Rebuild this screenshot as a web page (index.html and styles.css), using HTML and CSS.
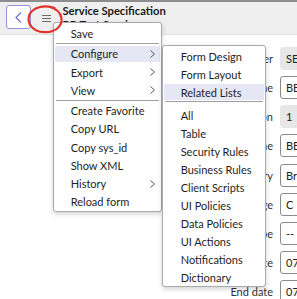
FILE: index.html
```html
<!DOCTYPE html>
<html lang="en">
<head>
    <meta charset="UTF-8">
    <meta name="viewport" content="width=device-width, initial-scale=1.0">
    <title>Service Specification</title>
    <link rel="stylesheet" href="styles.css">
</head>
<body>

    <header class="topbar">
        <button class="back-btn" aria-label="Back">
            <svg width="7" height="11" viewBox="0 0 7 11"><polyline points="6,0.5 1,5.5 6,10.5" fill="none" stroke="#6d72cc" stroke-width="1.2"/></svg>
        </button>
        <span class="hamburger">
            <svg width="9" height="7" viewBox="0 0 9 7"><path d="M0 0.5H9M0 3.5H9M0 6.5H9" stroke="#6b6b6b" stroke-width="1"/></svg>
        </span>
        <h1 class="title">Service Specification<br>BB Test Service</h1>
    </header>

    <div class="form">
        <div class="row"><label>Number</label><div class="field readonly">SES0001234</div></div>
        <div class="row"><label>Name</label><div class="field">BB Test Service</div></div>
        <div class="row"><label>Version</label><div class="field readonly">1</div></div>
        <div class="row"><label>Service line</label><div class="field">BB Test Service</div></div>
        <div class="row"><label>Category</label><div class="field">Broadband</div></div>
        <div class="row"><label>Lifecycle stage</label><div class="field">C 1 Design</div></div>
        <div class="row"><label>Type</label><div class="field">-- None --</div></div>
        <div class="row"><label>Start date</label><div class="field">07/01/2024</div></div>
        <div class="row"><label>End date</label><div class="field">07/01/2025</div></div>
    </div>

    <!-- context menu -->
    <ul class="menu main-menu">
        <li><div class="item">Save</div></li>
        <li class="sep"></li>
        <li class="active"><div class="item">Configure <svg class="chev" width="5" height="8" viewBox="0 0 5 8"><polyline points="0.5,0.5 4.5,4 0.5,7.5" fill="none" stroke="#555" stroke-width="1"/></svg></div></li>
        <li><div class="item">Export <svg class="chev" width="5" height="8" viewBox="0 0 5 8"><polyline points="0.5,0.5 4.5,4 0.5,7.5" fill="none" stroke="#555" stroke-width="1"/></svg></div></li>
        <li><div class="item">View <svg class="chev" width="5" height="8" viewBox="0 0 5 8"><polyline points="0.5,0.5 4.5,4 0.5,7.5" fill="none" stroke="#555" stroke-width="1"/></svg></div></li>
        <li class="sep"></li>
        <li><div class="item">Create Favorite</div></li>
        <li><div class="item">Copy URL</div></li>
        <li><div class="item">Copy sys_id</div></li>
        <li><div class="item">Show XML</div></li>
        <li><div class="item">History <svg class="chev" width="5" height="8" viewBox="0 0 5 8"><polyline points="0.5,0.5 4.5,4 0.5,7.5" fill="none" stroke="#555" stroke-width="1"/></svg></div></li>
        <li><div class="item">Reload form</div></li>
    </ul>

    <ul class="menu sub-menu">
        <li><div class="item">Form Design</div></li>
        <li><div class="item">Form Layout</div></li>
        <li class="active"><div class="item">Related Lists</div></li>
        <li class="sep"></li>
        <li><div class="item">All</div></li>
        <li><div class="item">Table</div></li>
        <li><div class="item">Security Rules</div></li>
        <li><div class="item">Business Rules</div></li>
        <li><div class="item">Client Scripts</div></li>
        <li><div class="item">UI Policies</div></li>
        <li><div class="item">Data Policies</div></li>
        <li><div class="item">UI Actions</div></li>
        <li><div class="item">Notifications</div></li>
        <li><div class="item">Dictionary</div></li>
    </ul>

    <!-- red circle drawn round the menu button -->
    <svg class="annotation" width="70" height="40" viewBox="0 0 70 40">
        <path d="M54.5 8C46 4.5 33 6.5 29.3 15C26.3 23.5 33 31.8 44 32.2C55.5 32.6 62.8 26 61.4 17.8C60.4 12.3 56.5 8.8 49.5 6.8" fill="none" stroke="#e2322b" stroke-width="2.2" stroke-linecap="round"/>
    </svg>

</body>
</html>
```

FILE: styles.css
```css
* {
    margin: 0;
    padding: 0;
    box-sizing: border-box;
}

body {
    font-family: 'Lato', 'Liberation Sans', sans-serif;
    width: 297px;
    height: 299px;
    overflow: hidden;
    position: relative;
    background: #fff;
    color: #222;
}

/* top bar */
.topbar {
    display: flex;
    align-items: flex-start;
    height: 35px;
    padding: 3px 0 0 6px;
    background: #efefef;
    border-top: 2px solid #8d8d8d;
    border-bottom: 1px solid #e0e0e0;
}

.back-btn {
    width: 25px;
    height: 24px;
    border: 1px solid #8f94d8;
    border-radius: 3px;
    background: #fff;
    display: flex;
    align-items: center;
    justify-content: center;
    flex-shrink: 0;
}

.hamburger {
    display: block;
    width: 9px;
    height: 7px;
    margin: 10px 0 0 11px;
    flex-shrink: 0;
}

.hamburger svg {
    display: block;
}

.title {
    margin: -1px 0 0 11.5px;
    font-size: 11.2px;
    font-weight: 700;
    line-height: 13.5px;
    color: #1a1a1a;
    white-space: nowrap;
}

/* form behind the menu */
.form {
    padding-top: 8.7px;
}

.row {
    display: flex;
    align-items: center;
    height: 29.2px;
}

.row label {
    width: 273px;
    flex-shrink: 0;
    text-align: right;
    font-size: 11px;
    color: #333;
}

.field {
    margin-left: 7px;
    width: 120px;
    height: 23px;
    flex-shrink: 0;
    padding-left: 5px;
    border: 1px solid #8a8a8a;
    border-radius: 3px;
    font-size: 11px;
    line-height: 21px;
    white-space: nowrap;
    overflow: hidden;
}

.field.readonly {
    background: #e7e7e7;
    border-color: #e7e7e7;
}

/* menus */
.menu {
    position: absolute;
    list-style: none;
    background: #fff;
    border: 1px solid #a9a9b1;
    border-radius: 3px;
    box-shadow: 0 2px 5px rgba(0, 0, 0, 0.18);
    font-size: 11px;
    color: #1e1e1e;
}

.menu li {
    display: flex;
    padding: 1px;
}

.menu .item {
    flex: 1;
    display: flex;
    align-items: center;
    justify-content: space-between;
    border-radius: 1px;
    white-space: nowrap;
}

.menu .active .item {
    background: #e5e7f5;
}

.menu .sep {
    height: 1px;
    padding: 0;
    margin: 0 2px 1px;
    background: #a0a0a0;
}

.main-menu {
    left: 53px;
    top: 21.5px;
    width: 108.5px;
    padding-top: 2px;
    z-index: 2;
}

.main-menu li {
    height: 18.25px;
}

.main-menu .item {
    padding: 0 4.5px 0 15.7px;
}

.sub-menu {
    left: 161.7px;
    top: 45px;
    width: 104.5px;
    padding-top: 1px;
    z-index: 3;
}

.sub-menu li {
    height: 18px;
}

.sub-menu .item {
    padding: 0 4px 0 17px;
}

.sub-menu .sep {
    margin: 0 2px 4px;
}

.chev {
    flex-shrink: 0;
}

.annotation {
    position: absolute;
    left: 0;
    top: 0;
    z-index: 5;
}
```
